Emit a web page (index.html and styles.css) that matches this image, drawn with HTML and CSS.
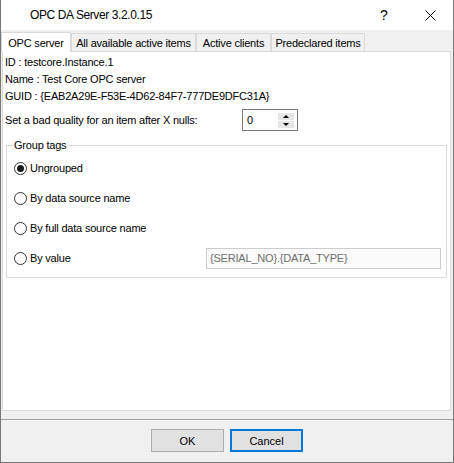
FILE: index.html
```html
<!DOCTYPE html>
<html>
<head>
    <title>OPC DA Server 3.2.0.15</title>
    <link rel="stylesheet" href="styles.css">
</head>
<body>
    <div class="window">
        <div class="titlebar">
            <span class="title">OPC DA Server 3.2.0.15</span>
            <span class="caption-btn help">?</span>
            <span class="caption-btn close">
                <svg width="11" height="11" viewBox="0 0 11 11"><path d="M0.5 0.5 L10.5 10.5 M10.5 0.5 L0.5 10.5" stroke="#000" stroke-width="1" fill="none"/></svg>
            </span>
        </div>
        <div class="tabs">
            <div class="tab active tab-opc">OPC server</div>
            <div class="tab tab-all">All available active items</div>
            <div class="tab tab-clients">Active clients</div>
            <div class="tab tab-predeclared">Predeclared items</div>
        </div>
        <div class="panel">
            <div class="info">ID : testcore.Instance.1</div>
            <div class="info">Name : Test Core OPC server</div>
            <div class="info">GUID : {EAB2A29E-F53E-4D62-84F7-777DE9DFC31A}</div>
            <div class="nulls-row">
                <span class="nulls-label">Set a bad quality for an item after X nulls:</span>
                <div class="spin">
                    <span class="spin-value">0</span>
                    <div class="spin-buttons">
                        <div class="spin-btn"><span class="arrow-up"></span></div>
                        <div class="spin-btn"><span class="arrow-down"></span></div>
                    </div>
                </div>
            </div>
            <fieldset class="group">
                <legend>Group tags</legend>
                <div class="radio-row"><span class="radio checked"></span>Ungrouped</div>
                <div class="radio-row"><span class="radio"></span>By data source name</div>
                <div class="radio-row"><span class="radio"></span>By full data source name</div>
                <div class="radio-row"><span class="radio"></span>By value
                    <div class="value-field">{SERIAL_NO}.{DATA_TYPE}</div>
                </div>
            </fieldset>
        </div>
        <div class="footer">
            <button class="btn">OK</button>
            <button class="btn default">Cancel</button>
        </div>
    </div>
</body>
</html>
```

FILE: styles.css
```css
body {
    margin: 0;
    background: #ffffff;
}
.window {
    width: 454px;
    height: 463px;
    box-sizing: border-box;
    border: 1px solid #777777;
    border-top: none;
    background: #f0f0f0;
    display: flex;
    flex-direction: column;
    font-family: "Liberation Sans", Arial, sans-serif;
    font-size: 11px;
    color: #000000;
}
.titlebar {
    height: 30px;
    flex: none;
    background: #ffffff;
    display: flex;
    align-items: center;
    padding-left: 29px;
}
.title {
    flex: 1;
    font-size: 12px;
    letter-spacing: -0.4px;
}
.caption-btn {
    width: 46px;
    height: 30px;
    display: flex;
    align-items: center;
    justify-content: center;
}
.help {
    font-size: 14px;
}
.tabs {
    height: 21px;
    flex: none;
    display: flex;
    align-items: flex-end;
}
.tab {
    height: 18px;
    box-sizing: border-box;
    border: 1px solid #d9d9d9;
    border-bottom: none;
    background: #f0f0f0;
    display: flex;
    align-items: center;
    justify-content: center;
    letter-spacing: -0.2px;
}
.tab.active {
    height: 20px;
    margin-bottom: -1px;
    background: #ffffff;
    position: relative;
    z-index: 1;
}
.tab-opc { width: 70px; }
.tab-all { width: 125px; }
.tab-clients { width: 75px; }
.tab-predeclared { width: 94px; }
.panel {
    flex: 1;
    margin: 0 2px 8px 1px;
    border: 1px solid #d9d9d9;
    background: #ffffff;
    padding: 2px 1px 0 1px;
    letter-spacing: -0.2px;
}
.info {
    line-height: 17px;
    padding-left: 1px;
}
.nulls-row {
    margin-top: 4px;
    height: 22px;
    display: flex;
    align-items: center;
}
.nulls-label {
    width: 237px;
    padding-left: 1px;
}
.spin {
    width: 56px;
    height: 22px;
    box-sizing: border-box;
    border: 1px solid #7a7a7a;
    display: flex;
    align-items: center;
    padding: 0 3px 0 4px;
}
.spin-value {
    flex: 1;
}
.spin-buttons {
    display: flex;
    flex-direction: column;
    gap: 1px;
}
.spin-btn {
    width: 16px;
    height: 7px;
    background: #e6e6e6;
    display: flex;
    align-items: center;
    justify-content: center;
}
.arrow-up {
    border-left: 3px solid transparent;
    border-right: 3px solid transparent;
    border-bottom: 3px solid #000000;
}
.arrow-down {
    border-left: 3px solid transparent;
    border-right: 3px solid transparent;
    border-top: 3px solid #000000;
}
.group {
    margin: 8px 2px 0 2px;
    padding: 1px 5px 4px 7px;
    border: 1px solid #dcdcdc;
    min-width: 0;
}
.group legend {
    padding: 0;
    line-height: 13px;
}
.radio-row {
    height: 30px;
    display: flex;
    align-items: center;
}
.radio {
    width: 13px;
    height: 13px;
    box-sizing: border-box;
    border: 1px solid #333333;
    border-radius: 50%;
    background: #ffffff;
    margin-right: 3px;
    display: flex;
    align-items: center;
    justify-content: center;
}
.radio.checked::after {
    content: "";
    width: 7px;
    height: 7px;
    border-radius: 50%;
    background: #1a1a1a;
}
.value-field {
    margin-left: auto;
    width: 235px;
    height: 21px;
    box-sizing: border-box;
    border: 1px solid #cccccc;
    background: #fbfbfb;
    color: #6d6d6d;
    line-height: 19px;
    padding-left: 3px;
}
.footer {
    height: 43px;
    flex: none;
    box-sizing: border-box;
    border-top: 1px solid #a0a0a0;
    display: flex;
    justify-content: center;
    align-items: flex-start;
    gap: 6px;
    padding-top: 9px;
}
.btn {
    width: 73px;
    height: 23px;
    box-sizing: border-box;
    border: 1px solid #adadad;
    background: #e1e1e1;
    font-family: "Liberation Sans", Arial, sans-serif;
    font-size: 11px;
    color: #000000;
    padding: 0;
}
.btn.default {
    border: 2px solid #0078d7;
}
```
